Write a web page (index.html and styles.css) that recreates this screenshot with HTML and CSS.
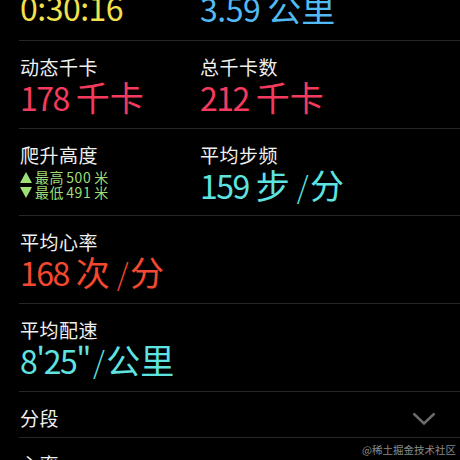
FILE: index.html
```html
<!DOCTYPE html>
<html lang="zh-CN">
  <head>
    <meta charset="utf-8">
    <meta content="width=device-width, initial-scale=1.0" name="viewport">
    <link rel="stylesheet" href="styles.css">
    <title>体能训练</title>
  </head>
  <body>
    <div class="lista">
      <section class="fila arriba">
        <div class="valor amarillo">0:30:16</div>
        <div class="valor azul">3.59<span class="ud">公里</span></div>
      </section>

      <section class="fila">
        <div class="dato">
          <div class="nombre">动态千卡</div>
          <div class="valor rojo">178<span class="ud">千卡</span></div>
        </div>
        <div class="dato">
          <div class="nombre">总千卡数</div>
          <div class="valor rojo">212<span class="ud">千卡</span></div>
        </div>
      </section>

      <section class="fila baja">
        <div class="dato">
          <div class="nombre">爬升高度</div>
          <div class="altura">
            <div class="linea"><svg class="tri" viewBox="0 0 12 11"><polygon points="6,0 12,11 0,11"/></svg>最高<span class="num">500</span>米</div>
            <div class="linea"><svg class="tri" viewBox="0 0 12 11"><polygon points="0,0 12,0 6,11"/></svg>最低<span class="num">491</span>米</div>
          </div>
        </div>
        <div class="dato">
          <div class="nombre">平均步频</div>
          <div class="valor cian">159<span class="ud">步</span><span class="bar">/</span><span class="ud">分</span></div>
        </div>
      </section>

      <section class="fila">
        <div class="dato">
          <div class="nombre">平均心率</div>
          <div class="valor naranja">168<span class="ud">次</span><span class="bar">/</span><span class="ud">分</span></div>
        </div>
      </section>

      <section class="fila">
        <div class="dato">
          <div class="nombre">平均配速</div>
          <div class="valor cian">8'25"<span class="bar pegada">/</span><span class="ud">公里</span></div>
        </div>
      </section>

      <section class="fila corta">
        <div class="nombre">分段</div>
        <svg class="flecha" viewBox="0 0 24 13"><polyline points="1.5,1.5 12,11.5 22.5,1.5"/></svg>
      </section>

      <section class="fila corta">
        <div class="nombre">心率</div>
      </section>
    </div>

    <div class="marca">@稀土掘金技术社区</div>
  </body>
</html>
```

FILE: styles.css
```css
* { box-sizing: border-box; }
body {
    margin: 0;
    height: 460px;
    overflow: hidden;
    background: #000;
    color: #f0f0f0;
    font-family: "Noto Sans CJK SC", "Noto Sans", sans-serif;
}
.lista {
    margin: -48px 0 0 19px;
}
.fila {
    display: grid;
    grid-template-columns: 180px 1fr;
    height: 88px;
    padding: 14px 0 0 1px;
    border-top: 1px solid #262626;
}
.fila.arriba {
    padding-top: 38px;
    border-top: none;
}
.fila.arriba .valor {
    letter-spacing: -0.5px;
}
.fila.baja {
    height: 87px;
}
.fila.corta {
    display: flex;
    justify-content: space-between;
    height: 46px;
}
.nombre {
    font-size: 19px;
    line-height: 24px;
    letter-spacing: 0.5px;
}
.valor {
    margin-top: -1px;
    font-size: 32px;
    line-height: 37px;
    letter-spacing: -1.5px;
    white-space: nowrap;
}
.valor .ud {
    margin-left: 7px;
    font-size: 34px;
    letter-spacing: 0;
}
.valor .bar {
    margin-left: 7px;
    font-size: 30px;
    font-weight: 300;
}
.valor .bar + .ud {
    margin-left: 3px;
}
.valor .bar.pegada {
    margin-left: 3px;
}
.amarillo { color: #f2e14c; }
.azul { color: #52b9f2; }
.rojo { color: #f43b5d; }
.cian { color: #5ee3e0; }
.naranja { color: #f4482f; }
.altura {
    margin-top: 3px;
    color: #9fdf78;
    font-size: 14px;
    line-height: 15px;
    letter-spacing: 0.6px;
}
.linea {
    display: flex;
    align-items: center;
    height: 15px;
}
.altura .num {
    margin: 0 3px 0 2px;
}
.tri {
    width: 12px;
    height: 11px;
    margin-right: 3px;
    fill: #9fdf78;
}
.flecha {
    width: 24px;
    height: 13px;
    margin: 6px 24px 0 0;
    fill: none;
    stroke: #6b6b6b;
    stroke-width: 2.5;
}
.marca {
    position: absolute;
    right: 4px;
    bottom: 3px;
    font-size: 10.5px;
    color: rgba(255,255,255,.55);
}
```
